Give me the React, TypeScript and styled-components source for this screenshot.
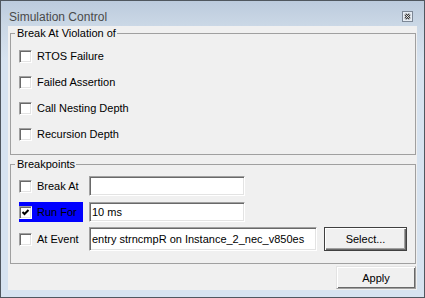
import React from "react"
import styled, { createGlobalStyle } from "styled-components"

const GlobalStyle = createGlobalStyle`
  html, body {
    margin: 0;
    padding: 0;
    background: #d7e3f0;
  }
  body {
    font-family: "Liberation Sans", Arial, sans-serif;
    font-size: 11px;
    color: #000;
  }
  * {
    box-sizing: border-box;
  }
`

const Window = styled.div`
  width: 425px;
  height: 298px;
  border: 1px solid #50575f;
  background: linear-gradient(#bccbdd, #cbd8e6 25px, #d7e3f0 60px, #d7e3f0);
  padding: 0 7px 7px;
  display: flex;
  flex-direction: column;
`

const TitleBar = styled.div`
  height: 25px;
  flex: none;
  display: flex;
  align-items: center;
  justify-content: space-between;
  padding: 6px 4px 0 1px;
`

const Title = styled.span`
  font-size: 12px;
  color: #4a4a4a;
`

const CloseBox = styled.svg`
  display: block;
`

const Client = styled.div`
  flex: 1;
  background: #f0f0f0;
  display: flex;
  flex-direction: column;
  padding: 0 1px 0 2px;
`

const Group = styled.fieldset<{ $top: number; $bottom: number; $padTop: number }>`
  margin: ${(p) => p.$top}px 0 0;
  padding: ${(p) => p.$padTop}px 0 ${(p) => p.$bottom}px 4px;
  border: 1px solid #a0a0a0;
  min-width: 0;
`

const Legend = styled.legend`
  padding: 0 1px 0 2px;
  line-height: 13px;
  font-size: 11px;
`

const CheckRow = styled.div`
  height: 26px;
  display: flex;
  align-items: center;
  gap: 5px;
  padding-left: 4px;
`

const Box = styled.span`
  width: 13px;
  height: 13px;
  flex: none;
  background: #fff;
  border-top: 1px solid #a0a0a0;
  border-left: 1px solid #a0a0a0;
  border-right: 1px solid #fff;
  border-bottom: 1px solid #fff;
  box-shadow: inset 1px 1px 0 #696969, inset -1px -1px 0 #e3e3e3;
  display: flex;
  align-items: center;
  justify-content: center;
`

const FieldRow = styled.div<{ $h: number }>`
  height: ${(p) => p.$h}px;
  display: flex;
  align-items: center;
  padding-left: 4px;
`

const CheckLabel = styled.div<{ $active?: boolean }>`
  width: 64px;
  height: 20px;
  margin-right: 6px;
  display: flex;
  align-items: center;
  gap: 5px;
  background: ${(p) => (p.$active ? "#0000ff" : "transparent")};
  color: #000;
`

const TextField = styled.input<{ $w: number; $h: number }>`
  width: ${(p) => p.$w}px;
  height: ${(p) => p.$h}px;
  margin: 0;
  padding: 0 0 0 2px;
  font: inherit;
  font-size: 11px;
  color: #000;
  background: #fff;
  border-top: 1px solid #a0a0a0;
  border-left: 1px solid #a0a0a0;
  border-right: 1px solid #fff;
  border-bottom: 1px solid #fff;
  box-shadow: inset 1px 1px 0 #696969, inset -1px -1px 0 #e3e3e3;
  outline: none;
`

const Button = styled.button<{ $default?: boolean; $w: number; $h: number }>`
  width: ${(p) => p.$w}px;
  height: ${(p) => p.$h}px;
  margin: 0 0 0 ${(p) => (p.$default ? 7 : 0)}px;
  padding: 0;
  font: inherit;
  font-size: 11px;
  color: #000;
  background: #f0f0f0;
  border: 1px solid ${(p) => (p.$default ? "#404040" : "#a0a0a0")};
  border-top-color: ${(p) => (p.$default ? "#404040" : "#e3e3e3")};
  border-left-color: ${(p) => (p.$default ? "#404040" : "#e3e3e3")};
  box-shadow: ${(p) =>
    p.$default
      ? "inset 1px 1px 0 #fff, inset -1px -1px 0 #696969, inset -2px -2px 0 #a0a0a0"
      : "inset 1px 1px 0 #fff, inset -1px -1px 0 #696969"};
`

const Footer = styled.div`
  display: flex;
  justify-content: flex-end;
  margin-top: 2px;
`

const Check = ({ on }: { on?: boolean }) => (
  <Box>
    {on && (
      <svg width="9" height="9" viewBox="0 0 9 9">
        <polyline points="1.5,4 3.5,6 7.5,2" fill="none" stroke="#000" strokeWidth="2" />
      </svg>
    )}
  </Box>
)

const violations = ["RTOS Failure", "Failed Assertion", "Call Nesting Depth", "Recursion Depth"]

export default function App() {
  return (
    <>
      <GlobalStyle />
      <Window>
        <TitleBar>
          <Title>Simulation Control</Title>
          <CloseBox width="11" height="11" viewBox="0 0 11 11">
            <rect x="0.5" y="0.5" width="10" height="10" fill="#e6ecf3" stroke="#7d8896" />
            <path d="M3.2 3.2 L7.8 7.8 M7.8 3.2 L3.2 7.8" stroke="#3a3a3a" strokeWidth="2.4" />
            <path d="M3.2 3.2 L7.8 7.8 M7.8 3.2 L3.2 7.8" stroke="#fff" strokeWidth="0.8" />
          </CloseBox>
        </TitleBar>
        <Client>
          <Group $top={1} $padTop={3} $bottom={7}>
            <Legend>Break At Violation of</Legend>
            {violations.map((v) => (
              <CheckRow key={v}>
                <Check />
                <span>{v}</span>
              </CheckRow>
            ))}
          </Group>
          <Group $top={3} $padTop={2} $bottom={10}>
            <Legend>Breakpoints</Legend>
            <FieldRow $h={26}>
              <CheckLabel>
                <Check />
                <span>Break At</span>
              </CheckLabel>
              <TextField $w={156} $h={20} defaultValue="" />
            </FieldRow>
            <FieldRow $h={26}>
              <CheckLabel $active>
                <Check on />
                <span>Run For</span>
              </CheckLabel>
              <TextField $w={156} $h={20} defaultValue="10 ms" />
            </FieldRow>
            <FieldRow $h={28}>
              <CheckLabel>
                <Check />
                <span>At Event</span>
              </CheckLabel>
              <TextField $w={228} $h={24} defaultValue="entry strncmpR on Instance_2_nec_v850es" />
              <Button $default $w={83} $h={24}>
                Select...
              </Button>
            </FieldRow>
          </Group>
          <Footer>
            <Button $w={80} $h={23}>
              Apply
            </Button>
          </Footer>
        </Client>
      </Window>
    </>
  )
}
